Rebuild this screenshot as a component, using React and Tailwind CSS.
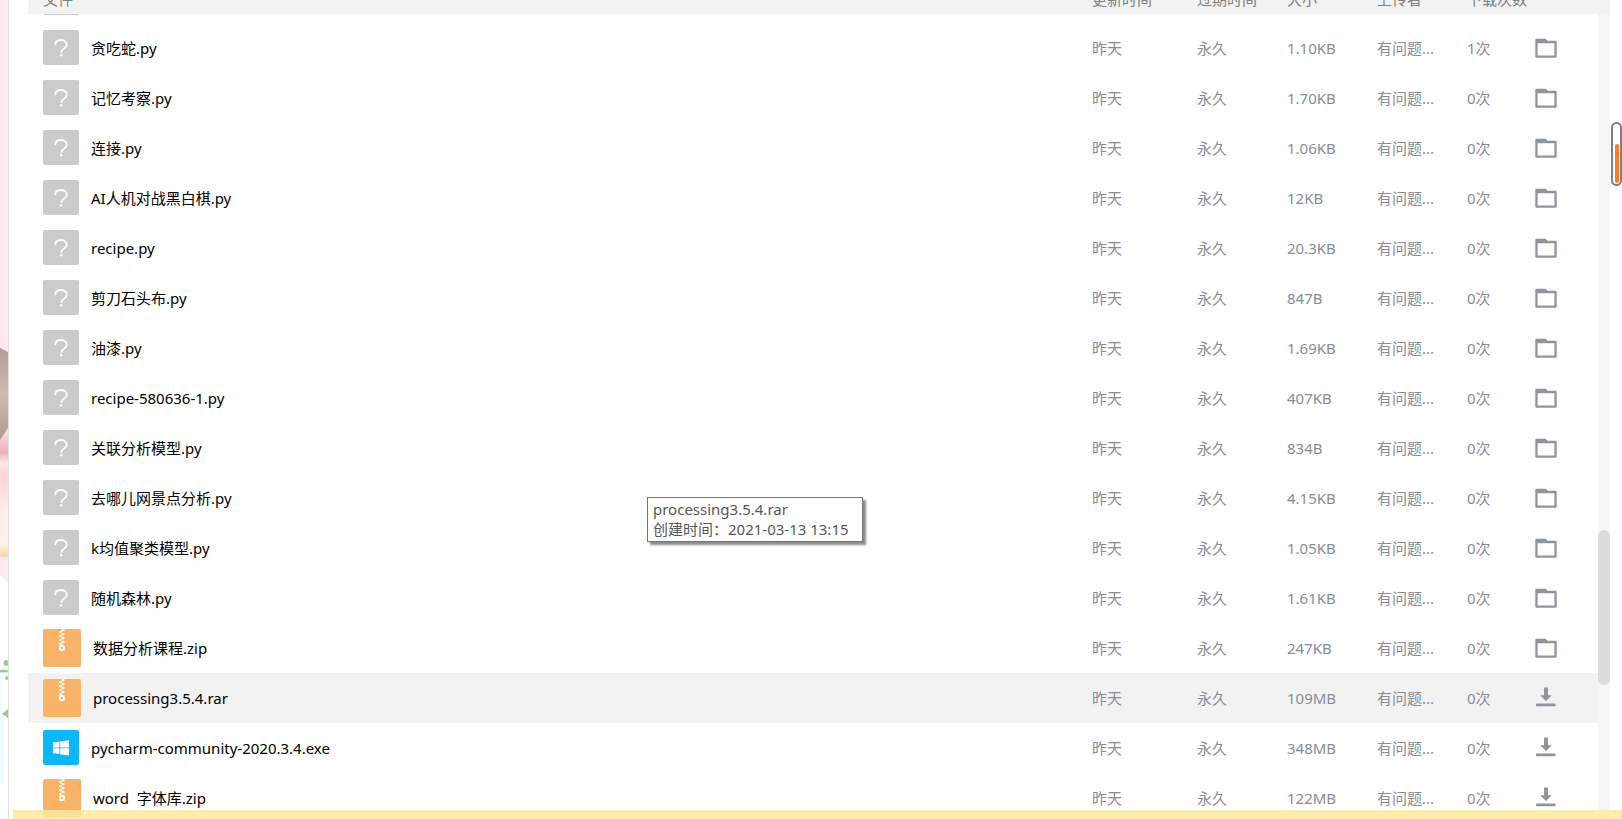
const files = [
  { name: '贪吃蛇.py', type: 'unknown', size: '1.10KB', count: 1 },
  { name: '记忆考察.py', type: 'unknown', size: '1.70KB', count: 0 },
  { name: '连接.py', type: 'unknown', size: '1.06KB', count: 0 },
  { name: 'AI人机对战黑白棋.py', type: 'unknown', size: '12KB', count: 0 },
  { name: 'recipe.py', type: 'unknown', size: '20.3KB', count: 0 },
  { name: '剪刀石头布.py', type: 'unknown', size: '847B', count: 0 },
  { name: '油漆.py', type: 'unknown', size: '1.69KB', count: 0 },
  { name: 'recipe-580636-1.py', type: 'unknown', size: '407KB', count: 0 },
  { name: '关联分析模型.py', type: 'unknown', size: '834B', count: 0 },
  { name: '去哪儿网景点分析.py', type: 'unknown', size: '4.15KB', count: 0 },
  { name: 'k均值聚类模型.py', type: 'unknown', size: '1.05KB', count: 0 },
  { name: '随机森林.py', type: 'unknown', size: '1.61KB', count: 0 },
  { name: '数据分析课程.zip', type: 'zip', size: '247KB', count: 0 },
  { name: 'processing3.5.4.rar', type: 'zip', size: '109MB', count: 0, remote: true, active: true },
  { name: 'pycharm-community-2020.3.4.exe', type: 'exe', size: '348MB', count: 0, remote: true },
  { name: 'word  字体库.zip', type: 'zip', size: '122MB', count: 0, remote: true }
];

const headers = ['文件', '更新时间', '过期时间', '大小', '上传者', '下载次数'];

const FileIcon = ({ type }) => {
  if (type === 'zip') {
    return (
      <svg width="38" height="38" viewBox="0 0 38 38" className="shrink-0" aria-hidden="true">
        <rect width="38" height="38" rx="2" fill="#f9b368" />
        <g fill="#fff">
          {[0, 4, 8, 12].map(y => (
            <g key={y}>
              <rect x="18.8" y={y} width="2.6" height="2.2" />
              <rect x="16.2" y={y + 2} width="2.6" height="2.2" />
            </g>
          ))}
        </g>
        <rect x="17" y="17" width="4" height="4.2" rx="1" fill="none" stroke="#fff" strokeWidth="1.8" />
      </svg>
    );
  }

  if (type === 'exe') {
    return (
      <svg width="36" height="36" viewBox="0 0 36 36" className="shrink-0" aria-hidden="true">
        <rect width="36" height="35" rx="2" fill="#0cb7fb" />
        <path
          d="M10 12.5l6.4-.9v5.8H10zM17.2 11.5l8.8-1.2v7.1h-8.8zM10 18.3h6.4v5.8l-6.4-.9zM17.2 18.3H26v7.1l-8.8-1.2z"
          fill="#fff"
        />
      </svg>
    );
  }

  return (
    <svg width="36" height="36" viewBox="0 0 36 36" className="shrink-0" aria-hidden="true">
      <rect width="36" height="35" rx="2" fill="#cbcbcb" />
      <path
        d="M12.2 15.2c0-3.4 2.5-5.2 5.8-5.2s5.8 2 5.8 4.8c0 3.8-5.6 3.9-5.6 8"
        fill="none"
        stroke="#fff"
        strokeWidth="1.8"
      />
      <circle cx="18.2" cy="25.2" r="1.2" fill="#fff" />
    </svg>
  );
};

const FolderIcon = () => (
  <svg width="22" height="20" viewBox="0 0 22 20" aria-hidden="true">
    <path
      fillRule="evenodd"
      d="M1.3.8h9.2l2.2 2h8q1 0 1 1v15q0 1-1 1H1.3q-1 0-1-1v-17q0-1 1-1zM2.6 5.2v12.2h16.8V5.2z"
      fill="#90949d"
    />
  </svg>
);

const DownloadIcon = () => (
  <svg width="22" height="22" viewBox="0 0 22 22" aria-hidden="true">
    <path d="M9 .5h4v7.7h3.8L11 14 5.2 8.2H9z" fill="#90949d" />
    <rect x="1" y="16.6" width="19.6" height="2.6" rx=".8" fill="#90949d" />
  </svg>
);

const FileRow = ({ file }) => (
  <tr className={file.active ? 'h-[50px] bg-[#f2f2f2]' : 'h-[50px]'}>
    <td className="pl-[15px]">
      <a href="#file" className="flex items-center gap-3 whitespace-pre text-black">
        <FileIcon type={file.type} />
        {file.name}
      </a>
    </td>
    <td>昨天</td>
    <td>永久</td>
    <td>{file.size}</td>
    <td>有问题...</td>
    <td>{file.count}次</td>
    <td>
      <button type="button" className="block" aria-label={file.remote ? '下载' : '打开文件夹'}>
        {file.remote ? <DownloadIcon /> : <FolderIcon />}
      </button>
    </td>
  </tr>
);

const Wallpaper = () => (
  <svg className="h-full w-2 shrink-0" viewBox="0 0 8 819" preserveAspectRatio="none" aria-hidden="true">
    <defs>
      <linearGradient id="hair" x1="0" y1="0" x2="0" y2="1">
        <stop offset="0" stopColor="#b59c94" />
        <stop offset="0.5" stopColor="#d3bab1" />
        <stop offset="1" stopColor="#b39a91" />
      </linearGradient>
      <linearGradient id="skin" x1="0" y1="0" x2="0" y2="1">
        <stop offset="0.4" stopColor="#f8dede" />
        <stop offset="0.5" stopColor="#e5b3c2" />
        <stop offset="0.55" stopColor="#ffe6e8" />
        <stop offset="0.6" stopColor="#ffd5d5" />
        <stop offset="0.8" stopColor="#fff0e8" />
        <stop offset="0.94" stopColor="#fff2e6" />
        <stop offset="1" stopColor="#ffd0ae" />
      </linearGradient>
      <filter id="soft" x="-20%" y="-20%" width="140%" height="140%">
        <feGaussianBlur stdDeviation="0.7" />
      </filter>
    </defs>
    <rect width="8" height="819" fill="#fff" />
    <path d="M0 0h8v583l-8-8z" fill="#ffe9f2" />
    <path d="M0 348l8 4v205H0z" fill="url(#skin)" />
    <path d="M0 348l8 4v76l-8 12z" fill="url(#hair)" />
    <path d="M0 660q5 50 4 124H0z" fill="#f3fbff" />
    <g fill="#9ccc96" filter="url(#soft)">
      <ellipse cx="6" cy="663" rx="2.5" ry="3" />
      <ellipse cx="4" cy="671" rx="5" ry="1.5" />
      <ellipse cx="7" cy="678" rx="2" ry="2" />
      <path d="M2 714l6-5v9z" />
    </g>
  </svg>
);

const Tooltip = () => (
  <div
    role="tooltip"
    className="absolute top-[497px] left-[647px] w-[216px] border border-[#767676] bg-white px-[5px] pt-px pb-[2px] leading-5 whitespace-nowrap text-[#575757] shadow-[3px_3px_2px_rgba(0,0,0,0.45)]"
  >
    <p>processing3.5.4.rar</p>
    <p>创建时间：2021-03-13 13:15</p>
  </div>
);

const App = () => {
  return (
    <div className="relative flex h-screen overflow-hidden bg-white font-['Noto_Sans','Noto_Sans_CJK_SC',sans-serif] text-[15px] leading-6">
      <Wallpaper />

      <main className="flex min-w-0 flex-1 border-l border-[#e2e0e2] pl-[19px]">
        <table className="w-full table-fixed self-start text-left text-[#8a8d96]">
          <colgroup>
            <col />
            <col className="w-[105px]" />
            <col className="w-[90px]" />
            <col className="w-[90px]" />
            <col className="w-[90px]" />
            <col className="w-[68px]" />
            <col className="w-[63px]" />
          </colgroup>
          <thead className="bg-[#f2f2f2]">
            <tr>
              {headers.map(title => (
                <th key={title} className="font-normal whitespace-nowrap text-[#808080] first:pl-[15px]">
                  <div className="flex h-[14px] flex-col justify-end">
                    <span className="pb-[3px]">{title}</span>
                  </div>
                </th>
              ))}
              <th aria-label="操作" />
            </tr>
          </thead>
          <tbody>
            {/* tail of the row that is scrolled under the header */}
            <tr>
              <td colSpan={7} className="pl-[15px]">
                <div className="flex h-[9px] flex-col justify-end overflow-hidden pb-[7px]">
                  <FileIcon type="unknown" />
                </div>
              </td>
            </tr>
            {files.map(file => (
              <FileRow key={file.name} file={file} />
            ))}
          </tbody>
        </table>

        <div className="flex w-3 shrink-0 flex-col">
          <div className="h-[14px] bg-[#f2f2f2]" />
          <div className="flex-1 bg-[#f5f6f8] pt-[516px]">
            <div className="h-[155px] rounded-full bg-[#dcdadb]" />
          </div>
        </div>

        <div className="w-3 shrink-0 pt-[122px]">
          <div className="ml-px flex h-16 w-[11px] flex-col items-center justify-end rounded-full border-2 border-[#7f7f7f] bg-white pb-px">
            <div className="h-[39px] w-1 rounded-full bg-[#ff7b22]" />
          </div>
        </div>
      </main>

      <Tooltip />
      <div className="absolute right-0 bottom-0 left-[13px] h-[9px] bg-[#fbe9a0]/85" />
    </div>
  );
};

export default App;
